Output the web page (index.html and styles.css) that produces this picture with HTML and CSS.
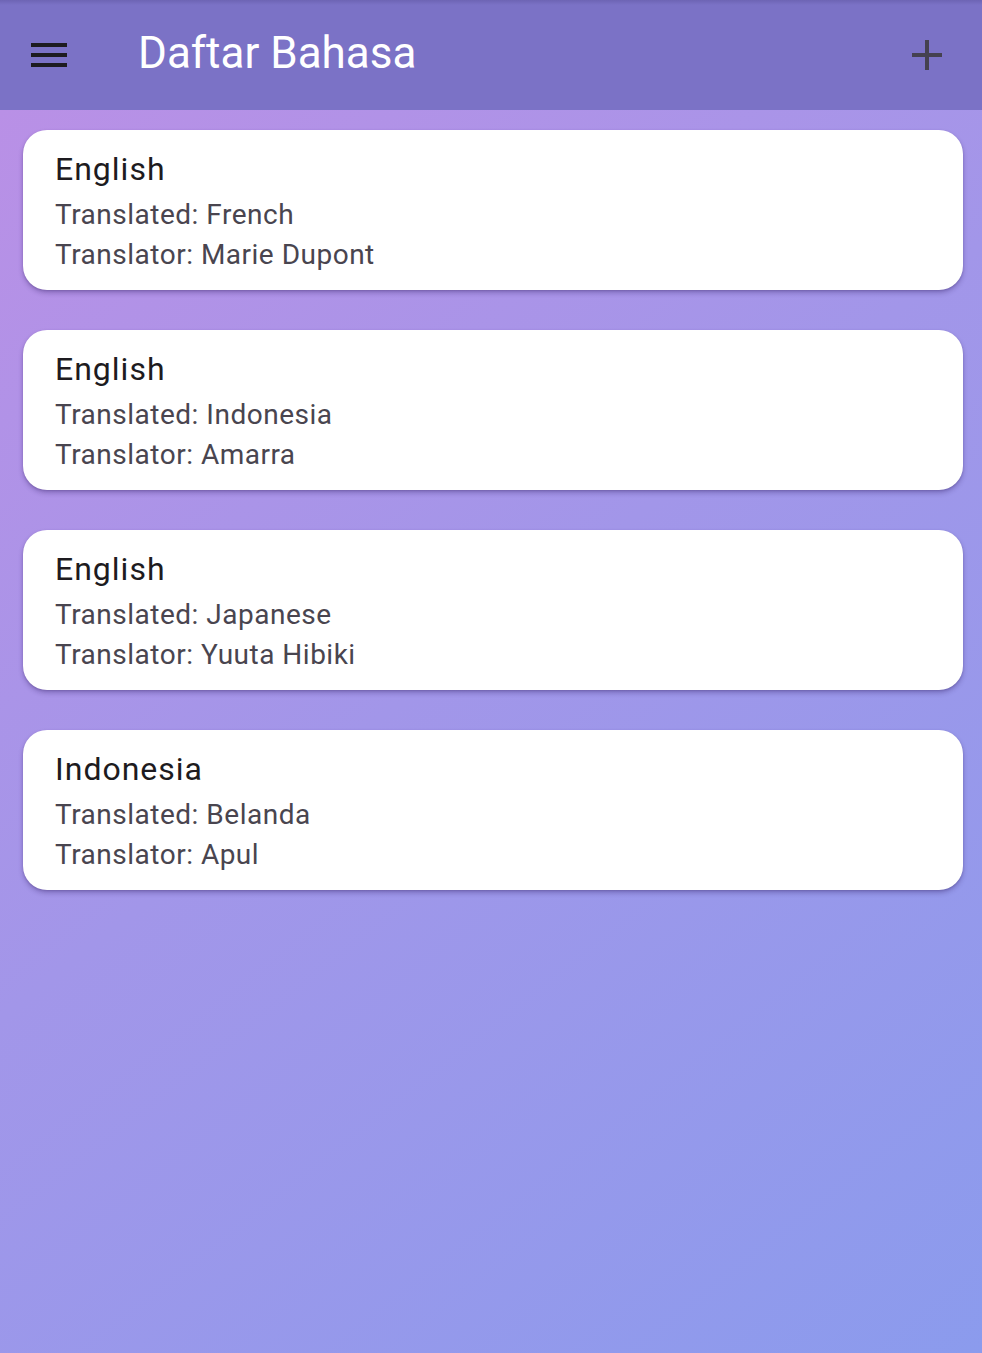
FILE: index.html
```html
<!DOCTYPE html>
<html lang="id">
<head>
<meta charset="utf-8">
<title>Daftar Bahasa</title>
<link rel="stylesheet" href="styles.css">
</head>
<body>
<div class="screen">
  <header class="appbar">
    <button class="icon-btn menu-btn" aria-label="Menu">
      <svg width="48" height="48" viewBox="0 0 24 24"><path fill="#1d1b20" d="M3 18h18v-2H3v2zm0-5h18v-2H3v2zm0-7v2h18V6H3z"/></svg>
    </button>
    <h1 class="title">Daftar Bahasa</h1>
    <button class="icon-btn add-btn" aria-label="Tambah">
      <svg width="30" height="30" viewBox="0 0 30 30"><path fill="#454150" d="M13 0h4v13h13v4H17v13h-4V17H0v-4h13z"/></svg>
    </button>
  </header>
  <main class="list">
    <div class="card">
      <div class="card-title">English</div>
      <div class="card-sub">Translated: French</div>
      <div class="card-sub">Translator: Marie Dupont</div>
    </div>
    <div class="card">
      <div class="card-title">English</div>
      <div class="card-sub">Translated: Indonesia</div>
      <div class="card-sub">Translator: Amarra</div>
    </div>
    <div class="card">
      <div class="card-title">English</div>
      <div class="card-sub">Translated: Japanese</div>
      <div class="card-sub">Translator: Yuuta Hibiki</div>
    </div>
    <div class="card">
      <div class="card-title">Indonesia</div>
      <div class="card-sub">Translated: Belanda</div>
      <div class="card-sub">Translator: Apul</div>
    </div>
  </main>
</div>
</body>
</html>
```

FILE: styles.css
```css
* { box-sizing: border-box; }
html, body {
  margin: 0;
  padding: 0;
  width: 982px;
  height: 1353px;
  overflow: hidden;
  font-family: Roboto, "Noto Sans", sans-serif;
}
.screen {
  width: 982px;
  height: 1353px;
  display: flex;
  flex-direction: column;
}
.appbar {
  height: 110px;
  flex: 0 0 110px;
  background: linear-gradient(to bottom, #6d64b4 0px, #7b72c6 5px, #7b72c6 100%);
  display: flex;
  align-items: center;
  padding: 0 40px 0 25px;
}
.icon-btn {
  border: 0;
  background: none;
  padding: 0;
  margin: 0;
  display: flex;
  align-items: center;
  justify-content: center;
}
.menu-btn { width: 48px; height: 48px; }
.title {
  margin: 0 0 4px 65px;
  flex: 1;
  font-weight: 400;
  font-size: 44px;
  line-height: 56px;
  color: #ffffff;
  letter-spacing: 0;
}
.add-btn { width: 30px; height: 30px; }
.list {
  flex: 1;
  background: linear-gradient(141.7deg, #b990e6 0%, #a296e9 45%, #8b9bed 100%);
  padding: 20px 19px 0 23px;
  display: flex;
  flex-direction: column;
  gap: 40px;
}
.card {
  background: #ffffff;
  border-radius: 24px;
  height: 160px;
  padding: 16px 33px 0 32px;
  box-shadow: 0 3px 5px rgba(50, 30, 100, 0.32), 0 1px 2px rgba(50, 30, 100, 0.2);
}
.card-title {
  font-size: 32px;
  line-height: 46px;
  margin-bottom: 3px;
  letter-spacing: 1px;
  color: #1d1b20;
}
.card-sub {
  font-size: 28px;
  line-height: 40px;
  letter-spacing: 0.5px;
  color: #49454f;
}
```
